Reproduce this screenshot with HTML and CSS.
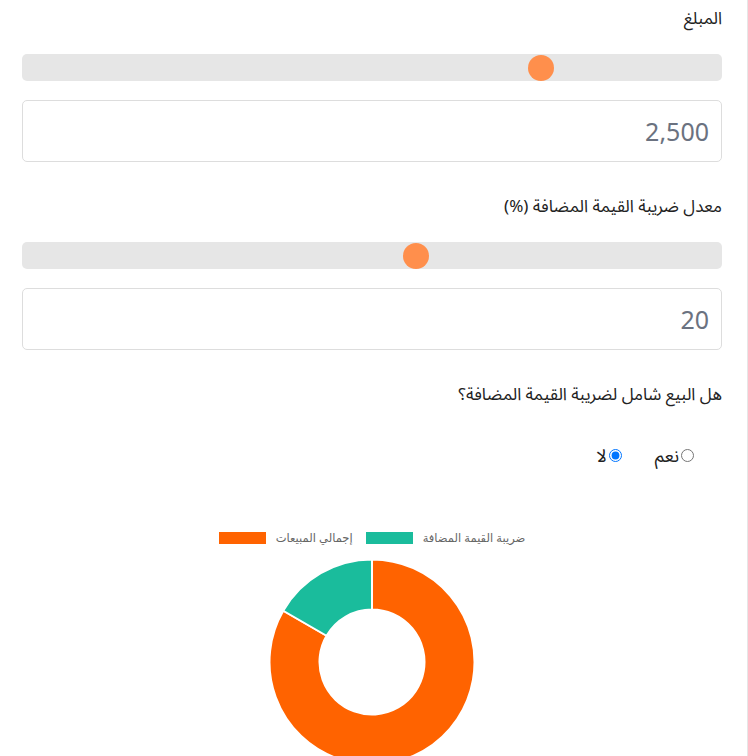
FILE: index.html
```html
<!DOCTYPE html>
<html lang="ar">
<head>
<meta charset="utf-8">
<title>حاسبة ضريبة القيمة المضافة</title>
<link rel="stylesheet" href="styles.css">
</head>
<body>
<div class="page" dir="rtl">
  <div class="field">
    <label class="label" for="amount">المبلغ</label>
    <input type="range" class="range" min="0" max="10000" value="2500">
    <input type="text" id="amount" class="num" value="2,500">
  </div>
  <div class="field">
    <label class="label" for="rate">معدل ضريبة القيمة المضافة (%)</label>
    <input type="range" class="range" min="0" max="46" value="20">
    <input type="text" id="rate" class="num" value="20">
  </div>
  <div class="question">هل البيع شامل لضريبة القيمة المضافة؟</div>
  <div class="radios">
    <label class="radio"><input type="radio" name="inc">نعم</label>
    <label class="radio"><input type="radio" name="inc" checked>لا</label>
  </div>
  <div class="chart">
    <div class="legend" dir="ltr">
      <span class="legend-box orange"></span><span class="legend-text">إجمالي المبيعات</span>
      <span class="legend-box teal"></span><span class="legend-text">ضريبة القيمة المضافة</span>
    </div>
    <svg class="donut" width="212" height="212" viewBox="0 0 212 212">
      <path class="seg-orange" d="M106 3.5 A102.5 102.5 0 1 1 17.23 54.75 L60.53 79.75 A52.5 52.5 0 1 0 106 53.5 Z"/>
      <path class="seg-teal" d="M17.23 54.75 A102.5 102.5 0 0 1 106 3.5 L106 53.5 A52.5 52.5 0 0 0 60.53 79.75 Z"/>
    </svg>
  </div>
</div>
</body>
</html>
```

FILE: styles.css
```css
* { box-sizing: border-box; }
html, body { margin: 0; padding: 0; background: #fff; }
body {
  font-family: "Noto Sans", "Noto Sans Arabic", "DejaVu Sans", sans-serif;
  color: #222;
}
.page {
  width: 748px;
  min-height: 780px;
  padding: 5px 25px 0 22px;
  border-right: 1px solid #e6e6e6;
}
.field { margin-bottom: 31px; }
.label {
  display: block;
  font-size: 17px;
  line-height: 26px;
  margin-bottom: 23px;
}
.range {
  -webkit-appearance: none;
  appearance: none;
  display: block;
  width: 100%;
  height: 27px;
  margin: 0 0 19px 0;
  background: #e6e6e6;
  border-radius: 5px;
  outline: none;
}
.range::-webkit-slider-thumb {
  -webkit-appearance: none;
  appearance: none;
  width: 26px;
  height: 26px;
  border-radius: 50%;
  background: #ff8f4c;
  border: none;
}
.num {
  display: block;
  width: 100%;
  height: 62px;
  margin: 0;
  padding: 0 12px;
  border: 1px solid #dddddd;
  border-radius: 5px;
  font-family: "Noto Sans", sans-serif;
  font-size: 25px;
  color: #6b7280;
  text-align: right;
  background: #fff;
}
.question {
  font-size: 17px;
  line-height: 26px;
  margin-top: 0;
}
.radios {
  display: flex;
  gap: 33px;
  padding-right: 28px;
  margin-top: 35px;
  height: 26px;
  align-items: center;
}
.radio {
  display: flex;
  align-items: center;
  font-size: 18px;
  line-height: 26px;
}
.radio input {
  width: 13px;
  height: 13px;
  margin: 0 0 0 2px;
  accent-color: #0075ff;
}
.chart {
  margin-top: 64px;
}
.legend {
  display: flex;
  justify-content: center;
  align-items: center;
  height: 12px;
  font-family: "Liberation Sans", "DejaVu Sans", sans-serif;
  font-size: 11.5px;
  color: #666;
}
.legend-box {
  width: 47px;
  height: 12px;
  margin-right: 10px;
}
.legend-text { margin-right: 13px; line-height: 12px; }
.legend-text:last-child { margin-right: 0; }
.orange { background: #ff6300; }
.teal { background: #1abc9c; }
.donut {
  display: block;
  margin: 12px auto 0;
}
.seg-orange { fill: #ff6300; stroke: #fff; stroke-width: 2; }
.seg-teal { fill: #1abc9c; stroke: #fff; stroke-width: 2; }
```
